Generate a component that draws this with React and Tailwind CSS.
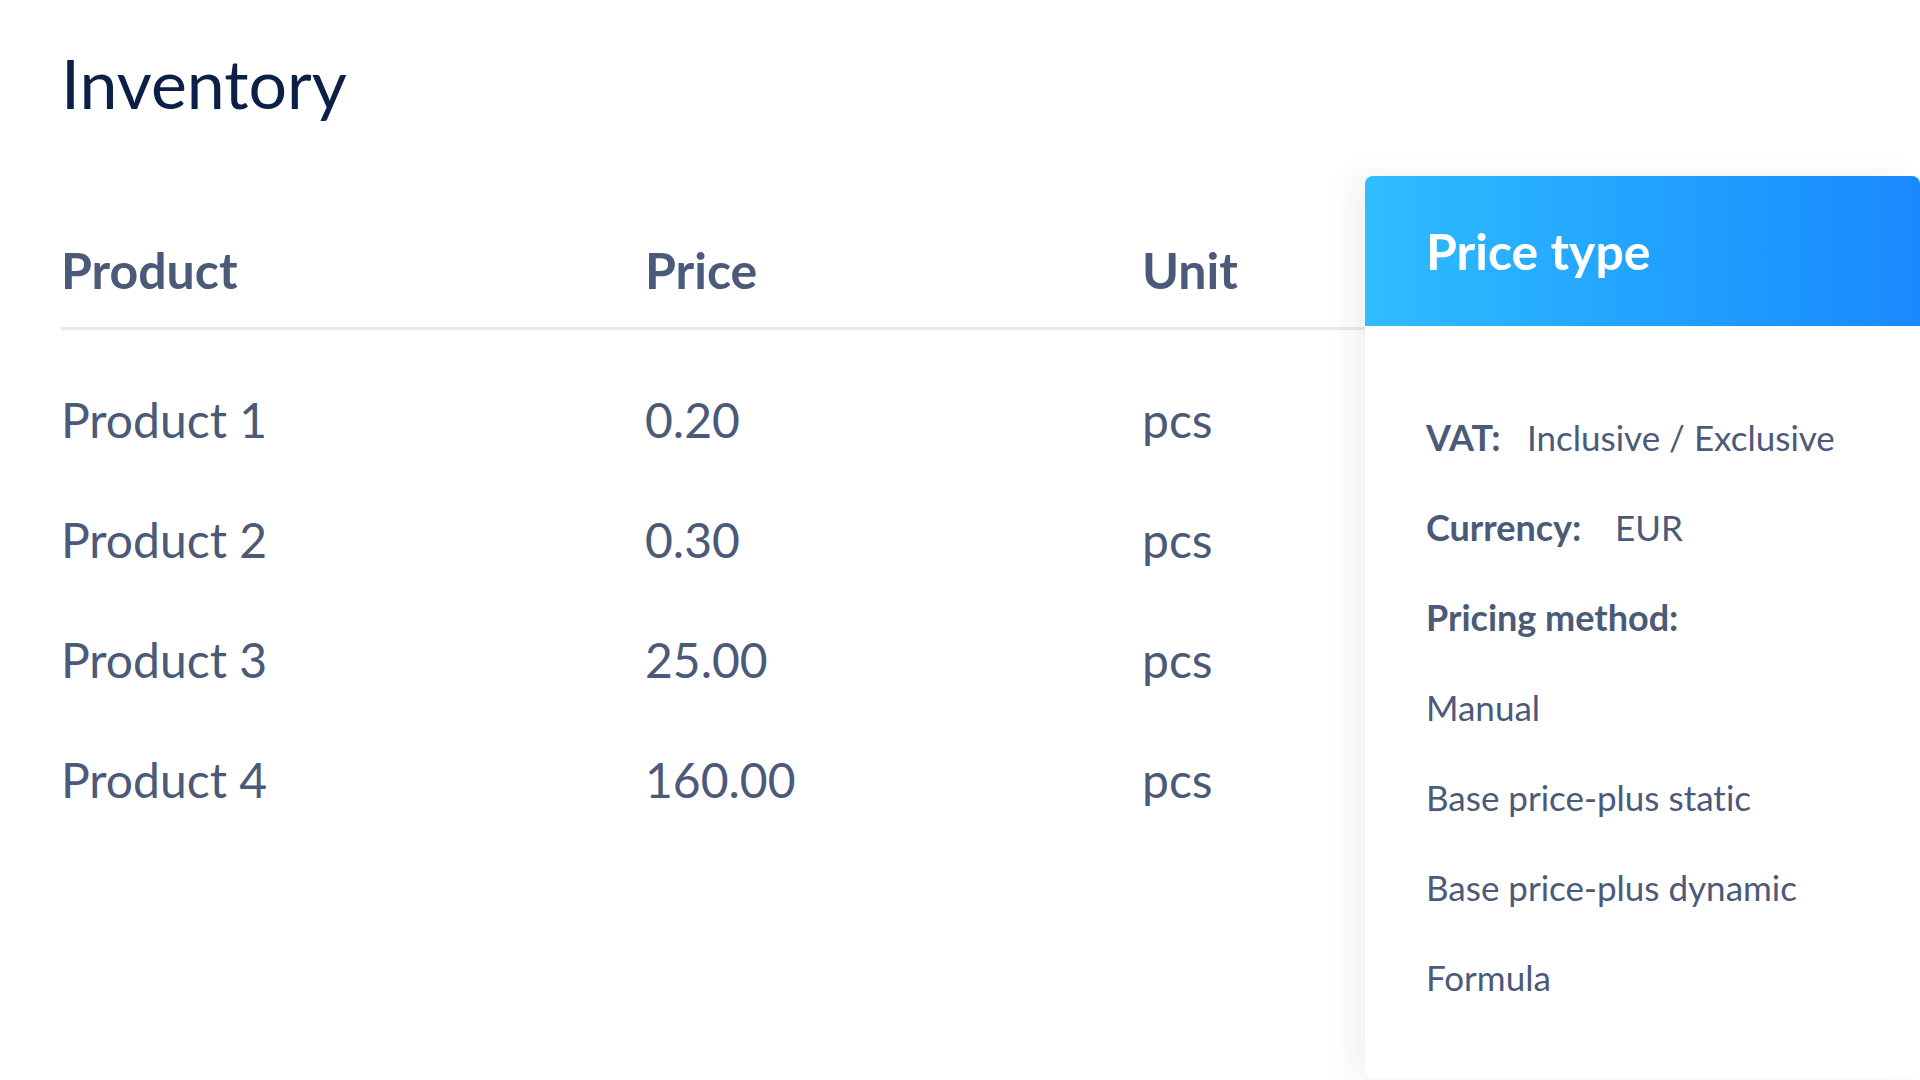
export default function App() {
  const rows = [
    ["Product 1", "0.20", "pcs"],
    ["Product 2", "0.30", "pcs"],
    ["Product 3", "25.00", "pcs"],
    ["Product 4", "160.00", "pcs"],
  ];
  const methods = ["Manual", "Base price-plus static", "Base price-plus dynamic", "Formula"];
  return (
    <div className="flex w-[1920px] h-[1080px] overflow-hidden bg-white font-['Lato',sans-serif] text-[#4b5a78] [font-variant-ligatures:none]">
      <div className="flex-1 pl-[61px] pt-[43px]">
        <h1 className="h-[80px] leading-[80px] text-[68px] font-normal text-[#0c1f46]">Inventory</h1>
        <div className="mt-[107px] flex h-[100px] pb-[17px] leading-[80px] text-[50px] font-bold border-b-[3px] border-[#e8e9ee]">
          <div className="w-[584px]">Product</div>
          <div className="w-[497px]">Price</div>
          <div className="flex-1">Unit</div>
        </div>
        <div className="pt-[30px]">
          {rows.map((r) => (
            <div key={r[0]} className="flex h-[120px] leading-[120px] text-[48px]">
              <div className="w-[584px]">{r[0]}</div>
              <div className="w-[497px]">{r[1]}</div>
              <div className="flex-1">{r[2]}</div>
            </div>
          ))}
        </div>
      </div>
      <div className="w-[555px] mt-[176px] h-[902px] rounded-[8px] bg-white shadow-[-14px_0_30px_rgba(30,40,70,0.06)] flex flex-col overflow-hidden">
        <div className="h-[150px] shrink-0 bg-gradient-to-r from-[#30bcff] to-[#1a89ff] pl-[61px] flex items-center">
          <span className="text-white text-[50px] font-bold">Price type</span>
        </div>
        <div className="pl-[61px] pt-[66px] text-[35px]">
          <div className="h-[90px] leading-[90px] flex">
            <span className="font-bold text-[36px] w-[101px]">VAT:</span>
            <span>Inclusive / Exclusive</span>
          </div>
          <div className="h-[90px] leading-[90px] flex">
            <span className="font-bold text-[36px] w-[189px]">Currency:</span>
            <span>EUR</span>
          </div>
          <div className="h-[90px] leading-[90px] font-bold text-[36px]">Pricing method:</div>
          {methods.map((m) => (
            <div key={m} className="h-[90px] leading-[90px]">{m}</div>
          ))}
        </div>
      </div>
    </div>
  );
}
